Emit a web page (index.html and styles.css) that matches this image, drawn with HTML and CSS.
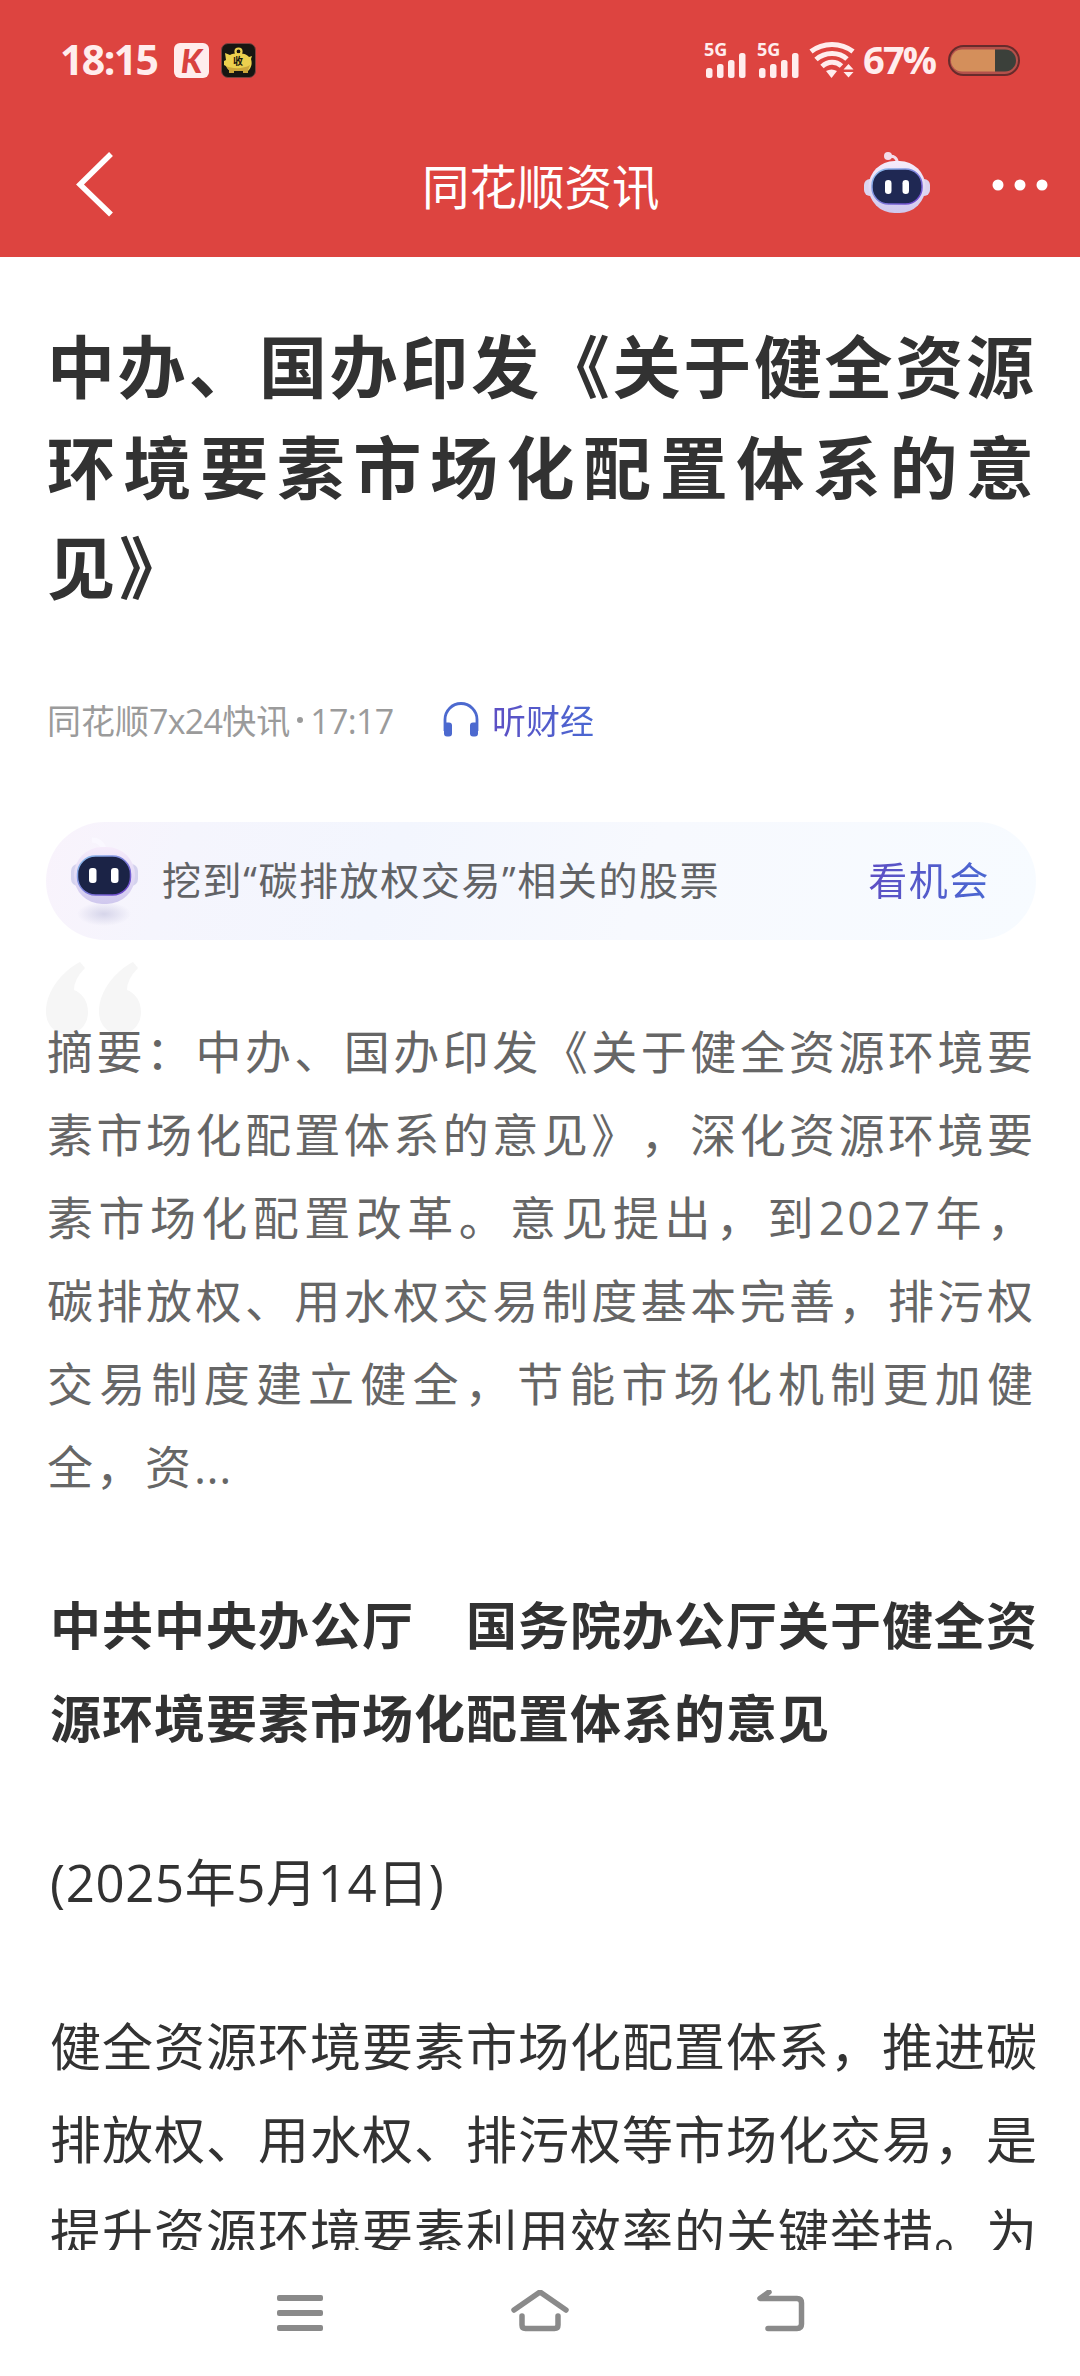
FILE: index.html
```html
<!DOCTYPE html>
<html lang="zh-CN">
<head>
    <meta charset="UTF-8">
    <meta name="viewport" content="width=device-width, initial-scale=1.0">
    <title>同花顺资讯</title>
    <link rel="stylesheet" href="styles.css">
</head>
<body>
    <div class="screen">
        <header class="top">
            <div class="status-bar">
                <span class="clock">18:15</span>
                <span class="app-k">K</span>
                <svg class="app-pig" width="35" height="35" viewBox="0 0 35 35">
                    <rect x="0.5" y="0.5" width="34" height="34" rx="6.5" fill="#171612" stroke="#7b4340"/>
                    <circle cx="17.5" cy="8.5" r="3" fill="none" stroke="#ecd04e" stroke-width="2.2"/>
                    <path d="M4 10l5 2c3-2 15-3 19 2l3-1-1 3c2 6-1 10-3 12v2h-5v-2h-9v2H8v-3c-2-1-2-4-5-5v-4l2-1z" fill="#ecd04e"/>
                    <path d="M5 23c6 3 18 3 24-1l-2 5v3h-5v-2h-9v2H8v-3z" fill="#cda63a"/>
                    <text x="17" y="22" font-size="10" font-weight="700" text-anchor="middle" fill="#17150d">收</text>
                </svg>
                <div class="status-right">
                    <svg class="signal" width="96" height="36" viewBox="0 0 96 36" fill="#ffeded">
                        <text x="0" y="13.5" class="net">5G</text>
                        <rect x="2" y="26" width="6.5" height="10" rx="2.5"/>
                        <rect x="13" y="22" width="6.5" height="14" rx="2.5"/>
                        <rect x="24" y="18" width="6.5" height="18" rx="2.5"/>
                        <rect x="35" y="11" width="6.5" height="25" rx="2.5"/>
                        <text x="53" y="13.5" class="net">5G</text>
                        <rect x="55" y="26" width="6.5" height="10" rx="2.5"/>
                        <rect x="66" y="22" width="6.5" height="14" rx="2.5"/>
                        <rect x="77" y="18" width="6.5" height="18" rx="2.5"/>
                        <rect x="88" y="11" width="6.5" height="25" rx="2.5"/>
                    </svg>
                    <svg class="wifi" width="46" height="38" viewBox="0 0 46 38" fill="none" stroke="#ffeded" stroke-width="5">
                        <path d="M2 10.500C14 1 32 1 44 10.500"/>
                        <path d="M7 18.500C16 10.500 30 10.500 38 18"/>
                        <path d="M13 25.500C19 20 27 20 32.500 25"/>
                        <path d="M17 30q5.500-3 11 0l-5.500 7z" fill="#ffeded" stroke="none"/>
                        <path d="M34.500 28.500l5-5.500 5 5.500zM34.500 31l5 5.500 5-5.500z" fill="#ffeded" stroke="none"/>
                    </svg>
                    <span class="percent">67%</span>
                    <svg width="72" height="31" viewBox="0 0 72 31">
                        <rect x="1" y="1" width="70" height="29" rx="14.500" fill="#b5504a" stroke="#672b2b" stroke-width="2"/>
                        <path d="M47 4.500v22H14a11 11 0 0 1 0-22z" fill="#d48f5b"/>
                        <path d="M47 4.500v22h10a11 11 0 0 0 0-22z" fill="#3b403a"/>
                    </svg>
                </div>
            </div>
            <div class="title-bar">
                <svg class="back" width="40" height="66" viewBox="0 0 40 66">
                    <path d="M37 2L6 32.500l31 30" fill="none" stroke="#fff" stroke-width="5.500"/>
                </svg>
                <span class="page-name">同花顺资讯</span>
                <svg class="robot" width="66" height="62" viewBox="0 0 66 62">
                    <defs>
                        <linearGradient id="shell" x1="0" y1="0" x2="0" y2="1">
                            <stop offset="0" stop-color="#f6ecfb"/>
                            <stop offset="1" stop-color="#cfc8ee"/>
                        </linearGradient>
                        <linearGradient id="rim" x1="0" y1="0" x2="1" y2="1">
                            <stop offset="0" stop-color="#8fc4ee"/>
                            <stop offset="1" stop-color="#6a3cc8"/>
                        </linearGradient>
                    </defs>
                    <path d="M24 4.500c6-1 9 1 9.500 7" fill="none" stroke="#f3dcea" stroke-width="3"/>
                    <circle cx="24" cy="4" r="4" fill="#f3dcea"/>
                    <rect x="0" y="27" width="66" height="17" rx="6" fill="#dcd4f0"/>
                    <rect x="4.500" y="9" width="57" height="52" rx="26" fill="url(#shell)"/>
                    <rect x="8" y="17" width="50" height="35" rx="16.500" fill="#1f2853" stroke="url(#rim)" stroke-width="1.500"/>
                    <rect x="21" y="28" width="6.500" height="14" rx="3.200" fill="#fff"/>
                    <rect x="38.500" y="28" width="6.500" height="14" rx="3.200" fill="#fff"/>
                </svg>
                <svg class="more" width="56" height="12" viewBox="0 0 56 12" fill="#fff">
                    <circle cx="6" cy="6" r="5.500"/>
                    <circle cx="28" cy="6" r="5.500"/>
                    <circle cx="50" cy="6" r="5.500"/>
                </svg>
            </div>
        </header>

        <main class="article">
            <h1 class="headline">
                <span class="line">中办、国办印发《关于健全资源</span>
                <span class="line">环境要素市场化配置体系的意</span>
                <span class="line last">见》</span>
            </h1>

            <div class="meta">
                <span class="source">同花顺<span class="num">7x24</span>快讯<i class="dot"></i><span class="num">17:17</span></span>
                <svg class="headphones" width="36" height="35" viewBox="0 0 36 35">
                    <path d="M2 29V17.500a16 16 0 0 1 32 0V29" fill="none" stroke="#4c69cf" stroke-width="2.800"/>
                    <path d="M1 20.500h5q3 0 3 3v8q0 3-3 3H4q-3 0-3-3zM35 20.500h-5q-3 0-3 3v8q0 3 3 3h2q3 0 3-3z" fill="#4c69cf"/>
                </svg>
                <span class="listen">听财经</span>
            </div>

            <div class="banner">
                <svg class="banner-robot" width="70" height="90" viewBox="0 0 70 90">
                    <defs>
                        <radialGradient id="shade">
                            <stop offset="0" stop-color="#d6d5ea"/>
                            <stop offset="1" stop-color="#d6d5ea" stop-opacity="0"/>
                        </radialGradient>
                    </defs>
                    <ellipse cx="34" cy="78" rx="27" ry="12" fill="url(#shade)"/>
                    <path d="M22 4q8 0 12 8" fill="none" stroke="#faf8ff" stroke-width="5"/>
                    <rect x="1" y="28" width="67" height="22" rx="7" fill="#d4d2ee"/>
                    <rect x="4" y="11" width="61" height="57" rx="28" fill="url(#shell)"/>
                    <rect x="7.500" y="20" width="53" height="39" rx="18" fill="#1b2346" stroke="url(#rim)" stroke-width="1.500"/>
                    <rect x="19" y="32" width="7.500" height="15" rx="3" fill="#fff"/>
                    <rect x="41" y="32" width="7.500" height="15" rx="3" fill="#fff"/>
                </svg>
                <span class="banner-text">挖到“碳排放权交易”相关的股票</span>
                <span class="banner-link">看机会</span>
            </div>

            <section class="summary">
                <svg class="quote" width="96" height="72" viewBox="0 0 96 72" fill="#f6f6f6">
                    <path d="M34 0l5 6Q28 17 28 28c8 3 14 11 14 22 0 13-9 22-21 22S0 63 0 50C0 28 17 9 34 0z"/>
                    <path d="M87 0l5 6Q81 17 81 28c8 3 14 11 14 22 0 13-9 22-21 22S53 63 53 50C53 28 70 9 87 0z"/>
                </svg>
                <p class="summary-text">
                    <span class="line">摘要：中办、国办印发《关于健全资源环境要</span>
                    <span class="line">素市场化配置体系的意见》，深化资源环境要</span>
                    <span class="line">素市场化配置改革。意见提出，到2027年，</span>
                    <span class="line">碳排放权、用水权交易制度基本完善，排污权</span>
                    <span class="line">交易制度建立健全，节能市场化机制更加健</span>
                    <span class="line last">全，资<span class="ellipsis">...</span></span>
                </p>
            </section>

            <section class="content">
                <p class="strong">
                    <span class="line">中共中央办公厅　国务院办公厅关于健全资</span>
                    <span class="line last">源环境要素市场化配置体系的意见</span>
                </p>
                <p><span class="line last date">(2025年5月14日)</span></p>
                <p>
                    <span class="line">健全资源环境要素市场化配置体系，推进碳</span>
                    <span class="line">排放权、用水权、排污权等市场化交易，是</span>
                    <span class="line">提升资源环境要素利用效率的关键举措。为</span>
                </p>
            </section>
        </main>

        <nav class="nav-bar">
            <svg width="46" height="46" viewBox="0 0 46 46" fill="#8a8a8a">
                <rect x="0" y="5" width="46" height="6" rx="2"/>
                <rect x="0" y="20" width="46" height="6" rx="2"/>
                <rect x="0" y="35" width="46" height="6" rx="2"/>
            </svg>
            <svg width="58" height="46" viewBox="0 0 58 46" fill="none" stroke="#8a8a8a" stroke-width="5.500" stroke-linecap="round" stroke-linejoin="round">
                <path d="M3 20L29 2l26 18"/>
                <path d="M11 26v9q0 3.500 3.500 3.500h29q3.500 0 3.500-3.500v-9"/>
            </svg>
            <svg width="50" height="46" viewBox="0 0 50 46" fill="none" stroke="#8a8a8a" stroke-width="5.500" stroke-linecap="round" stroke-linejoin="round">
                <path d="M13 2L4 8.500h37q4.500 0 4.500 4.500v21q0 4.500-4.500 4.500H12"/>
            </svg>
        </nav>
    </div>
</body>
</html>
```
FILE: styles.css
```css
* {
    box-sizing: border-box;
}
body {
    margin: 0;
    font-family: "Open Sans", "Noto Sans CJK SC", sans-serif;
    background-color: #fff;
    color: #323232;
    text-spacing-trim: space-all;
}
svg {
    display: block;
    flex-shrink: 0;
}
.screen {
    width: 1080px;
    height: 2376px;
    display: flex;
    flex-direction: column;
    overflow: hidden;
}

/* header */
.top {
    height: 257px;
    flex-shrink: 0;
    background-color: #dd4440;
    color: #fff;
}
.status-bar {
    height: 112px;
    padding: 8px 60px 0 60px;
    display: flex;
    align-items: center;
    color: #ffeded;
}
.clock {
    width: 114px;
    margin-top: -2px;
    font-size: 41px;
    font-weight: 700;
    letter-spacing: -1.6px;
}
.app-k {
    width: 35px;
    height: 35px;
    margin-right: 12px;
    border-radius: 6px;
    background-color: #ffeded;
    color: #d8423f;
    font-family: Lato, sans-serif;
    font-size: 33px;
    font-weight: 900;
    font-style: italic;
    line-height: 35px;
    text-align: center;
}
.status-right {
    margin-left: auto;
    display: flex;
    align-items: center;
}
.signal {
    overflow: visible;
}
.net {
    font-size: 18px;
    font-weight: 700;
}
.wifi {
    margin-left: 9px;
}
.percent {
    width: 93px;
    margin-top: -2px;
    padding-left: 8px;
    font-size: 38px;
    font-weight: 700;
    letter-spacing: -1.8px;
}
.title-bar {
    height: 145px;
    padding: 0 31px 0 74px;
    display: flex;
    align-items: center;
}
.back {
    margin-right: 308px;
}
.page-name {
    width: 442px;
    font-size: 47.5px;
}
.robot {
    margin-top: -3px;
    margin-right: 62px;
}

/* article */
.article {
    flex: 1;
    min-height: 0;
    overflow: hidden;
    padding: 0 45px 0 47px;
}
.line {
    display: block;
    white-space: nowrap;
    text-align: justify;
    text-align-last: justify;
    text-justify: inter-character;
}
.line.last {
    text-align-last: left;
}
.headline {
    margin: 60px 0 0 0;
    font-size: 68px;
    font-weight: 700;
    line-height: 100.5px;
    letter-spacing: 1px;
}
.headline .last {
    letter-spacing: 4px;
}
.meta {
    height: 60px;
    margin-top: 71px;
    display: flex;
    align-items: center;
    font-size: 34px;
}
.meta .num {
    letter-spacing: -0.7px;
}
.source {
    width: 396px;
    color: #9b9b9b;
}
.dot {
    display: inline-block;
    width: 6px;
    height: 6px;
    margin: 0 7px;
    border-radius: 50%;
    background-color: #9b9b9b;
    vertical-align: 11px;
}
.headphones {
    margin-right: 13px;
}
.listen,
.banner-link {
    background: linear-gradient(90deg, #5d4fc4, #4a68d2);
    background-clip: text;
    -webkit-background-clip: text;
    color: transparent;
}
.banner {
    height: 118px;
    margin: 72px -1px 0 -1px;
    padding: 0 46px 0 24px;
    display: flex;
    align-items: center;
    border-radius: 59px;
    background: linear-gradient(110deg, #f9f3fc 0%, #f5f5fd 14%, #f3f6fe 35%, #f7f9fe 60%, #f7fbff 100%);
    font-size: 39px;
    letter-spacing: 1.6px;
}
.banner-text {
    margin: -5px 0 0 22px;
    color: #626366;
}
.banner-link {
    margin: -5px 0 0 auto;
}
.summary {
    position: relative;
    padding-top: 70px;
}
.quote {
    position: absolute;
    left: -1px;
    top: 22px;
}
.summary-text {
    position: relative;
    margin: 0;
    color: #666;
    font-size: 46px;
    line-height: 83px;
    letter-spacing: 2px;
}
.summary-text .last {
    letter-spacing: 3px;
}
.ellipsis {
    letter-spacing: 0.5px;
}
.content {
    padding: 71px 0 0 3px;
    margin-right: -3px;
    font-size: 51px;
    line-height: 93px;
    letter-spacing: 1px;
}
.content p {
    margin: 0 0 71px;
}
.content .date {
    letter-spacing: 0.6px;
}
.strong {
    font-weight: 700;
}

/* system navigation */
.nav-bar {
    height: 126px;
    padding: 0 274px 0 277px;
    display: flex;
    align-items: center;
    justify-content: space-between;
    background-color: #fff;
}
```
